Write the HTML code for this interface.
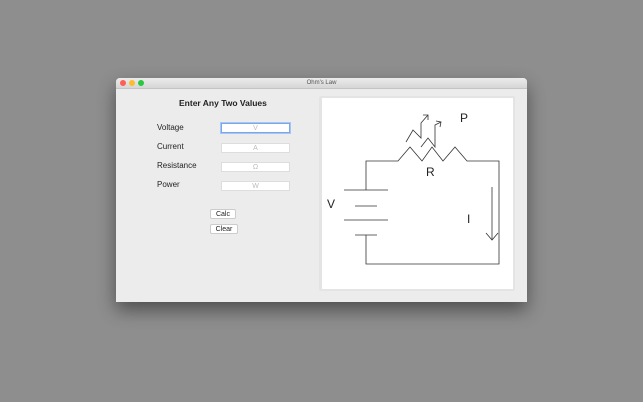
<!DOCTYPE html>
<html><head><style>
body{margin:0;width:643px;height:402px;background:#8e8e8e;position:relative;overflow:hidden;font-family:"Liberation Sans",sans-serif;}
.win{position:absolute;left:116px;top:78px;width:411px;height:224px;background:#ececec;box-shadow:0 8px 18px rgba(0,0,0,0.45);border-radius:4px 4px 0 0;overflow:hidden}
.tb{height:10px;background:linear-gradient(#ebebeb,#d6d6d6);border-bottom:1px solid #c4c4c4;text-align:center;font-size:6px;line-height:10px;color:#555}
.dot{position:absolute;top:2px;width:6px;height:6px;border-radius:50%}
.a{position:absolute;font-size:8px;color:#222}
.f{position:absolute;left:105px;width:67px;height:8px;background:#fff;border:1px solid #ddd;font-size:7px;color:#bbb;text-align:center;line-height:10px}
.b{position:absolute;background:#fff;border:1px solid #ccc;border-radius:2px;font-size:7px;line-height:9px;text-align:center;color:#222}
</style></head><body>
<div class="win">
<div class="tb">Ohm's Law</div>
<div class="dot" style="left:4px;background:#fc5f57"></div>
<div class="dot" style="left:13px;background:#fdbc2e"></div>
<div class="dot" style="left:22px;background:#28c840"></div>
<div class="a" style="left:63px;top:20px;font-weight:bold;font-size:8.5px">Enter Any Two Values</div>
<div class="a" style="left:41px;top:45px">Voltage</div>
<div class="a" style="left:41px;top:64px">Current</div>
<div class="a" style="left:41px;top:83px">Resistance</div>
<div class="a" style="left:41px;top:102px">Power</div>
<div class="f" style="top:45px;border:1px solid #7aa7e8;box-shadow:0 0 0 1px #a9c6f0">V</div>
<div class="f" style="top:65px">A</div>
<div class="f" style="top:84px">Ω</div>
<div class="f" style="top:103px">W</div>
<div class="b" style="left:94px;top:131px;width:24px;height:8px">Calc</div>
<div class="b" style="left:94px;top:146px;width:26px;height:8px">Clear</div>
<div style="position:absolute;left:203px;top:18px;width:196px;height:195px;background:#e4e4e4;border-radius:2px"></div>
<div style="position:absolute;left:206px;top:20px;width:191px;height:191px;background:#fff"></div>
</div>
<svg style="position:absolute;left:0;top:0" width="643" height="402" fill="none" stroke="#333" stroke-width="0.8">
<polyline points="366,190 366,161 398,161 410,147 422,161 432,147 443,161 455,147 467,161 499,161 499,264 366,264 366,235"/>
<line x1="344" y1="190" x2="388" y2="190"/><line x1="355" y1="206" x2="377" y2="206"/>
<line x1="344" y1="220" x2="388" y2="220"/><line x1="355" y1="235" x2="377" y2="235"/>
<polyline points="406,142 413,130 421,138 421,123 428,115"/><polyline points="423,115 428,115 428,120"/>
<polyline points="421,147 428,138 435,147 435,125 441,122"/><polyline points="436,121 441,122 440,127"/>
<line x1="492" y1="187" x2="492" y2="240"/><polyline points="486,233 492,240 498,233"/>
<g fill="#222" stroke="none" font-family="Liberation Sans" font-size="12">
<text x="460" y="122">P</text><text x="426" y="176">R</text><text x="327" y="208">V</text><text x="467" y="223">I</text></g>
</svg>
</body></html>
